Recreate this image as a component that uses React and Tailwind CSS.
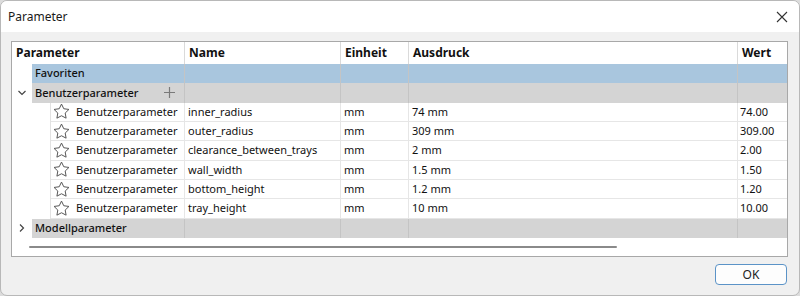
import React from 'react';

const cols = ['w-[173px]', 'w-[156px]', 'w-[68px]', 'w-[329px]', 'w-[47px]'];

const rows = [
  { name: 'inner_radius', expr: '74 mm', val: '74.00' },
  { name: 'outer_radius', expr: '309 mm', val: '309.00' },
  { name: 'clearance_between_trays', expr: '2 mm', val: '2.00' },
  { name: 'wall_width', expr: '1.5 mm', val: '1.50' },
  { name: 'bottom_height', expr: '1.2 mm', val: '1.20' },
  { name: 'tray_height', expr: '10 mm', val: '10.00' },
];

function Star() {
  return (
    <svg width="17" height="17" viewBox="0 0 24 24" fill="none" stroke="#555" strokeWidth="1.4" strokeLinejoin="round">
      <path d="M12 1.5l3.2 6.6 7.3 1-5.3 5.1 1.3 7.2L12 18l-6.5 3.4 1.3-7.2L1.5 9.1l7.3-1z" />
    </svg>
  );
}

function Chevron({ down }) {
  return (
    <svg width="10" height="10" viewBox="0 0 10 10" fill="none" stroke="#444" strokeWidth="1.2">
      {down ? <path d="M1.5 3l3.5 3.5L8.5 3" /> : <path d="M3 1.5l3.5 3.5L3 8.5" />}
    </svg>
  );
}

function GroupRow({ label, color, chevron, plus }) {
  return (
    <div className="flex h-[19.33px]">
      <div className="w-[20px] flex items-center justify-center bg-white">
        {chevron && <Chevron down={chevron === 'down'} />}
      </div>
      <div className={`w-[153px] ${color} flex items-center justify-between pl-[3px] pr-[9px] border-r border-[#c4c4c4]`}>
        <span className="font-medium">{label}</span>
        {plus && (
          <svg width="11" height="11" viewBox="0 0 11 11" stroke="#7a7a7a" strokeWidth="1.2">
            <path d="M5.5 0v11M0 5.5h11" />
          </svg>
        )}
      </div>
      <div className={`w-[156px] ${color} border-r border-[#c4c4c4]`} />
      <div className={`w-[68px] ${color} border-r border-[#c4c4c4]`} />
      <div className={`w-[329px] ${color} border-r border-[#c4c4c4]`} />
      <div className={`flex-1 ${color}`} />
    </div>
  );
}

export default function App() {
  return (
    <div className="w-[800px] h-[296px] bg-[#dcdcdc] text-[11px] text-[#111]" style={{ fontFamily: '"Noto Sans", "Open Sans", sans-serif' }}>
      <div className="w-full h-full rounded-[7px] border border-[#b8b8b8] bg-[#f0f0f0] overflow-hidden flex flex-col">
        {/* Title bar */}
        <div className="h-[31px] bg-white flex items-center justify-between pl-[7px] pr-[11px]">
          <span className="text-[12px] text-[#1a1a1a]">Parameter</span>
          <svg width="12" height="12" viewBox="0 0 12 12" stroke="#333" strokeWidth="1.1">
            <path d="M1 1l10 10M11 1L1 11" />
          </svg>
        </div>

        <div className="flex-1 flex flex-col px-[10px] pt-[9px]">
          {/* Table */}
          <div className="w-[777px] h-[216px] border border-[#a8a8a8] bg-white flex flex-col">
            <div className="flex h-[22px] font-bold text-[12px]">
              {['Parameter', 'Name', 'Einheit', 'Ausdruck', 'Wert'].map((h, i) => (
                <div key={h} className={`${i === 4 ? 'flex-1' : cols[i] + ' border-r border-[#dadada]'} flex items-center pl-[4px]`}>
                  {h}
                </div>
              ))}
            </div>

            <GroupRow label="Favoriten" color="bg-[#a9c6de]" />
            <GroupRow label="Benutzerparameter" color="bg-[#d4d4d4]" chevron="down" plus />

            {rows.map(r => (
              <div key={r.name} className="flex h-[19.33px]">
                <div className="w-[39px] bg-white border-r border-[#e2e2e2]" />
                <div className="w-[134px] flex items-center gap-[6px] pl-[2px] border-r border-b border-[#e6e6e6]">
                  <Star />
                  <span>Benutzerparameter</span>
                </div>
                <div className="w-[156px] flex items-center pl-[3px] border-r border-b border-[#e6e6e6]">{r.name}</div>
                <div className="w-[68px] flex items-center pl-[3px] border-r border-b border-[#e6e6e6]">mm</div>
                <div className="w-[329px] flex items-center pl-[3px] border-r border-b border-[#e6e6e6]">{r.expr}</div>
                <div className="flex-1 flex items-center pl-[2px] border-b border-[#e6e6e6]">{r.val}</div>
              </div>
            ))}

            <GroupRow label="Modellparameter" color="bg-[#d4d4d4]" chevron="right" />

            <div className="flex-1 flex items-center pl-[17px]">
              <div className="w-[588px] h-[2px] bg-[#8a8a8a] rounded-full" />
            </div>
          </div>

          {/* Footer */}
          <div className="flex justify-end pt-[7px] pr-[2px]">
            <button className="w-[72px] h-[21px] rounded-[4px] border border-[#5b93c7] bg-[#fdfdfd] text-[12px] text-[#222] flex items-center justify-center">
              OK
            </button>
          </div>
        </div>
      </div>
    </div>
  );
}
